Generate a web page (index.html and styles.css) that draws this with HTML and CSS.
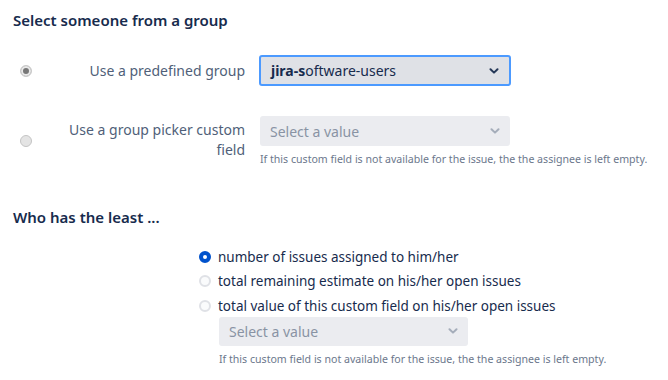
FILE: index.html
```html
<!DOCTYPE html>
<html lang="en">
<head>
    <meta charset="UTF-8">
    <meta name="viewport" content="width=device-width, initial-scale=1.0">
    <title>Assignee strategy</title>
    <link rel="stylesheet" href="styles.css">
</head>
<body>
    <div class="page">
        <!-- Group section -->
        <h2 class="section-title">Select someone from a group</h2>
        <div class="group-rows">
            <div class="group-row">
                <span class="radio radio-checked-gray"></span>
                <label class="row-label">Use a predefined group</label>
                <div class="field">
                    <div class="select select-focused">
                        <span class="select-value"><b>jira-s</b>oftware-users</span>
                        <svg class="chevron" width="10" height="6" viewBox="0 0 10 6"><path d="M1.5 1.2 L5 4.6 L8.5 1.2" fill="none" stroke="#253858" stroke-width="2" stroke-linecap="round" stroke-linejoin="round"/></svg>
                    </div>
                </div>
            </div>
            <div class="group-row group-row-tall">
                <span class="radio radio-gray"></span>
                <label class="row-label">Use a group picker custom field</label>
                <div class="field">
                    <div class="select select-disabled">
                        <span class="select-placeholder">Select a value</span>
                        <svg class="chevron" width="10" height="6" viewBox="0 0 10 6"><path d="M1.5 1.2 L5 4.6 L8.5 1.2" fill="none" stroke="#a5adba" stroke-width="2" stroke-linecap="round" stroke-linejoin="round"/></svg>
                    </div>
                    <p class="help">If this custom field is not available for the issue, the the assignee is left empty.</p>
                </div>
            </div>
        </div>

        <!-- Least section -->
        <h2 class="section-title second">Who has the least ...</h2>
        <div class="options">
            <div class="option">
                <span class="radio radio-blue"></span>
                <span>number of issues assigned to him/her</span>
            </div>
            <div class="option">
                <span class="radio radio-empty"></span>
                <span>total remaining estimate on his/her open issues</span>
            </div>
            <div class="option">
                <span class="radio radio-empty"></span>
                <span>total value of this custom field on his/her open issues</span>
            </div>
            <div class="option-field">
                <div class="select select-disabled select-small">
                    <span class="select-placeholder">Select a value</span>
                    <svg class="chevron" width="10" height="6" viewBox="0 0 10 6"><path d="M1.5 1.2 L5 4.6 L8.5 1.2" fill="none" stroke="#a5adba" stroke-width="2" stroke-linecap="round" stroke-linejoin="round"/></svg>
                </div>
                <p class="help">If this custom field is not available for the issue, the the assignee is left empty.</p>
            </div>
        </div>
    </div>
</body>
</html>
```

FILE: styles.css
```css
body {
    margin: 0;
    font-family: "Noto Sans", "Open Sans", sans-serif;
    background-color: #ffffff;
    color: #172b4d;
}
.page {
    padding: 8px 13px 0 13px;
}
.section-title {
    margin: 0;
    font-size: 15px;
    font-weight: 600;
    line-height: 24px;
    color: #172b4d;
}
.section-title.second {
    margin-top: 39px;
}
.group-rows {
    margin-top: 23px;
    display: flex;
    flex-direction: column;
    gap: 30px;
}
.group-row {
    display: grid;
    grid-template-columns: 19px 199px 252px;
    column-gap: 14px;
    align-items: start;
}
.group-row .radio {
    align-self: center;
    margin-left: 7px;
}
.row-label {
    text-align: right;
    font-size: 14px;
    line-height: 20px;
    color: #505f79;
    padding-top: 6px;
}
.group-row-tall .row-label {
    padding-top: 4px;
}
.select {
    box-sizing: border-box;
    height: 31px;
    display: flex;
    align-items: center;
    justify-content: space-between;
    padding: 0 10px;
    border-radius: 3px;
    font-size: 14px;
}
.select-focused {
    width: 252px;
    background-color: #dfe1e6;
    border: 2px solid #4c9aff;
    color: #172b4d;
}
.select-value b {
    font-weight: 700;
}
.select-disabled {
    width: 250px;
    height: 30px;
    background-color: #ebecf0;
    border: none;
    color: #8993a4;
    margin-left: 1px;
}
.select-small {
    width: 249px;
    height: 29px;
}
.chevron {
    flex-shrink: 0;
}
.help {
    margin: 6px 0 0 1px;
    font-size: 10.6px;
    line-height: 14px;
    color: #6b778c;
    white-space: nowrap;
}
.radio {
    box-sizing: border-box;
    width: 12px;
    height: 12px;
    border-radius: 50%;
    display: inline-block;
    flex-shrink: 0;
}
.radio-checked-gray {
    background-color: #e9e9e9;
    border: 1px solid #c8c8c8;
    box-shadow: inset 0 0 0 2px #e9e9e9, inset 0 0 0 6px #777777;
}
.radio-gray {
    background-color: #e4e4e4;
    border: 1px solid #c4c4c4;
}
.options {
    margin-top: 16px;
    margin-left: 186px;
    display: flex;
    flex-direction: column;
}
.option {
    display: flex;
    align-items: center;
    gap: 7px;
    font-size: 13.5px;
    line-height: 24.3px;
    color: #172b4d;
}
.radio-blue {
    background-color: #ffffff;
    border: 4px solid #0052cc;
}
.radio-empty {
    background-color: #fafbfc;
    border: 2px solid #dfe1e6;
}
.option-field {
    margin-left: 19px;
    margin-top: -1px;
}
```
